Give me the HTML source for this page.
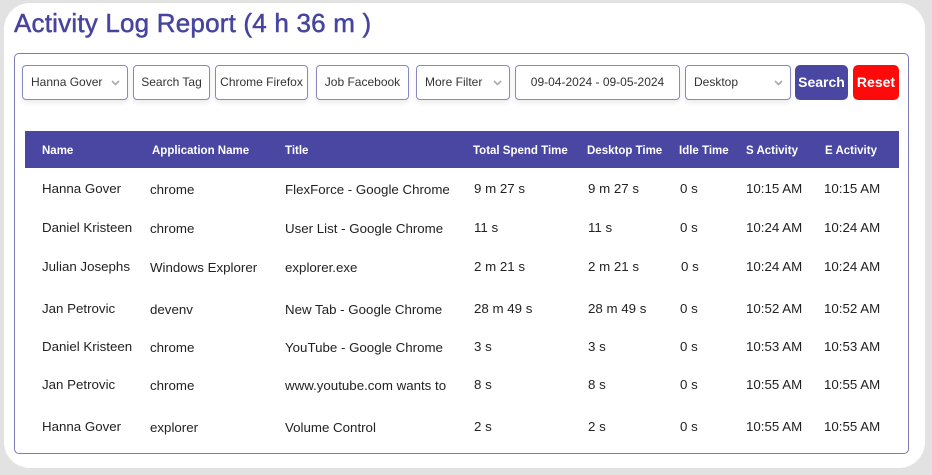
<!DOCTYPE html>
<html><head><style>
*{margin:0;padding:0;box-sizing:border-box}
body{width:932px;height:475px;background:#e2e2e2;font-family:"Liberation Sans",sans-serif;position:relative;overflow:hidden;color:#222}
.panel{position:absolute;left:4px;top:3px;width:921px;height:465px;background:#fff;border-radius:26px}
h1{position:absolute;left:14px;top:8px;font-size:26px;font-weight:normal;color:#46449f;-webkit-text-stroke:0.5px #46449f;letter-spacing:0.2px}
.card{position:absolute;left:14px;top:53px;width:895px;height:401px;border:1px solid #7d7bb8;border-radius:5px;background:#fff}
.f{position:absolute;top:65px;height:35px;border:1px solid #8a88c0;border-radius:4px;font-size:12px;line-height:33px;padding-left:8px;color:#333;background:#fff;box-shadow:0 3px 5px rgba(0,0,0,.08)}
.f.c{text-align:center;padding-left:0}
.arr{position:absolute;right:7px;top:14px;width:9px;height:6px}
.btn{position:absolute;top:65px;height:35px;border-radius:5px;color:#fff;font-size:14px;line-height:35px;text-align:center;font-weight:bold}
.hd{position:absolute;left:25px;top:131px;width:874px;height:37px;background:#4a47a3}
.h{position:absolute;top:145px;color:#fff;font-size:11.5px;font-weight:bold}
.t{position:absolute;font-size:13.3px;color:#222;white-space:nowrap}
</style></head><body>
<div class="panel"></div>
<h1>Activity Log Report (4 h 36 m )</h1>
<div class="card"></div>
<div class="f" style="left:22px;width:106px">Hanna Gover<svg class="arr" viewBox="0 0 9 6"><path d="M1 1l3.5 3.5L8 1" stroke="#aaa" stroke-width="1.6" fill="none"/></svg></div>
<div class="f c" style="left:133px;width:77px">Search Tag</div>
<div class="f c" style="left:215px;width:93px">Chrome Firefox</div>
<div class="f c" style="left:316px;width:93px">Job Facebook</div>
<div class="f" style="left:416px;width:94px">More Filter<svg class="arr" viewBox="0 0 9 6"><path d="M1 1l3.5 3.5L8 1" stroke="#aaa" stroke-width="1.6" fill="none"/></svg></div>
<div class="f c" style="left:515px;width:165px">09-04-2024 - 09-05-2024</div>
<div class="f" style="left:685px;width:106px">Desktop<svg class="arr" viewBox="0 0 9 6"><path d="M1 1l3.5 3.5L8 1" stroke="#aaa" stroke-width="1.6" fill="none"/></svg></div>
<div class="btn" style="left:795px;width:53px;background:#4a47a3">Search</div>
<div class="btn" style="left:853px;width:46px;background:#ff0a0a">Reset</div>
<div class="hd"></div>
<div class="h" style="left:42px">Name</div>
<div class="h" style="left:152px">Application Name</div>
<div class="h" style="left:285px">Title</div>
<div class="h" style="left:473px">Total Spend Time</div>
<div class="h" style="left:587px">Desktop Time</div>
<div class="h" style="left:679px">Idle Time</div>
<div class="h" style="left:746px">S Activity</div>
<div class="h" style="left:825px">E Activity</div>

<div class="t" style="left:42px;top:181px">Hanna Gover</div><div class="t" style="left:150px;top:182px">chrome</div><div class="t" style="left:285px;top:182px">FlexForce - Google Chrome</div><div class="t" style="left:474px;top:181px">9 m 27 s</div><div class="t" style="left:588px;top:181px">9 m 27 s</div><div class="t" style="left:680px;top:181px">0 s</div><div class="t" style="left:746px;top:181px">10:15 AM</div><div class="t" style="left:824px;top:181px">10:15 AM</div>

<div class="t" style="left:42px;top:220px">Daniel Kristeen</div><div class="t" style="left:150px;top:221px">chrome</div><div class="t" style="left:285px;top:221px">User List - Google Chrome</div><div class="t" style="left:474px;top:220px">11 s</div><div class="t" style="left:588px;top:220px">11 s</div><div class="t" style="left:680px;top:220px">0 s</div><div class="t" style="left:746px;top:220px">10:24 AM</div><div class="t" style="left:824px;top:220px">10:24 AM</div>

<div class="t" style="left:42px;top:259px">Julian Josephs</div><div class="t" style="left:150px;top:260px">Windows Explorer</div><div class="t" style="left:285px;top:260px">explorer.exe</div><div class="t" style="left:474px;top:259px">2 m 21 s</div><div class="t" style="left:588px;top:259px">2 m 21 s</div><div class="t" style="left:681px;top:259px">0 s</div><div class="t" style="left:746px;top:259px">10:24 AM</div><div class="t" style="left:824px;top:259px">10:24 AM</div>

<div class="t" style="left:42px;top:301px">Jan Petrovic</div><div class="t" style="left:150px;top:302px">devenv</div><div class="t" style="left:285px;top:302px">New Tab - Google Chrome</div><div class="t" style="left:474px;top:301px">28 m 49 s</div><div class="t" style="left:588px;top:301px">28 m 49 s</div><div class="t" style="left:680px;top:301px">0 s</div><div class="t" style="left:746px;top:301px">10:52 AM</div><div class="t" style="left:824px;top:301px">10:52 AM</div>

<div class="t" style="left:42px;top:339px">Daniel Kristeen</div><div class="t" style="left:150px;top:340px">chrome</div><div class="t" style="left:285px;top:340px">YouTube - Google Chrome</div><div class="t" style="left:474px;top:339px">3 s</div><div class="t" style="left:588px;top:339px">3 s</div><div class="t" style="left:680px;top:339px">0 s</div><div class="t" style="left:746px;top:339px">10:53 AM</div><div class="t" style="left:824px;top:339px">10:53 AM</div>

<div class="t" style="left:42px;top:377px">Jan Petrovic</div><div class="t" style="left:150px;top:378px">chrome</div><div class="t" style="left:285px;top:378px">www.youtube.com wants to</div><div class="t" style="left:474px;top:377px">8 s</div><div class="t" style="left:588px;top:377px">8 s</div><div class="t" style="left:680px;top:377px">0 s</div><div class="t" style="left:746px;top:377px">10:55 AM</div><div class="t" style="left:824px;top:377px">10:55 AM</div>

<div class="t" style="left:42px;top:419px">Hanna Gover</div><div class="t" style="left:150px;top:420px">explorer</div><div class="t" style="left:285px;top:420px">Volume Control</div><div class="t" style="left:474px;top:419px">2 s</div><div class="t" style="left:588px;top:419px">2 s</div><div class="t" style="left:680px;top:419px">0 s</div><div class="t" style="left:746px;top:419px">10:55 AM</div><div class="t" style="left:824px;top:419px">10:55 AM</div>
</body></html>
